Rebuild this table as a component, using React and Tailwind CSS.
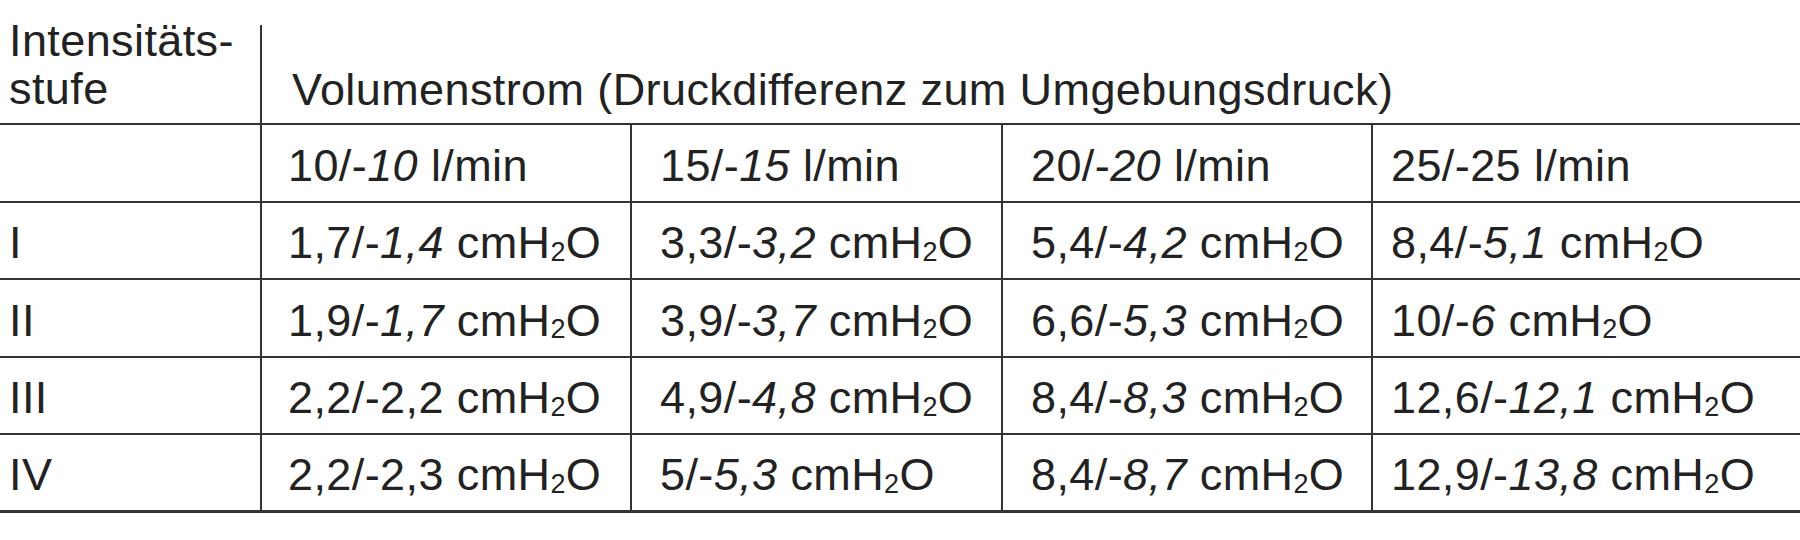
import React from "react";

const H2O = () => (
  <span>
    cmH<span className="relative top-[0.1em] text-[0.6em]">2</span>O
  </span>
);

const Val = ({ a, b, unit, it }) => (
  <span className="whitespace-nowrap">
    {a}/-<span className={it ? "italic" : ""}>{b}</span>{" "}
    {unit === "l" ? <span>l/min</span> : <H2O />}
  </span>
);

const rows = [
  { label: "", cells: [["10", "10", "l", 1], ["15", "15", "l", 1], ["20", "20", "l", 1], ["25", "25", "l", 0]], h: "h-[78px]" },
  { label: "I", cells: [["1,7", "1,4", "h", 1], ["3,3", "3,2", "h", 1], ["5,4", "4,2", "h", 1], ["8,4", "5,1", "h", 1]], h: "h-[77px]" },
  { label: "II", cells: [["1,9", "1,7", "h", 1], ["3,9", "3,7", "h", 1], ["6,6", "5,3", "h", 1], ["10", "6", "h", 1]], h: "h-[78px]" },
  { label: "III", cells: [["2,2", "2,2", "h", 0], ["4,9", "4,8", "h", 1], ["8,4", "8,3", "h", 1], ["12,6", "12,1", "h", 1]], h: "h-[77px]" },
  { label: "IV", cells: [["2,2", "2,3", "h", 0], ["5", "5,3", "h", 1], ["8,4", "8,7", "h", 1], ["12,9", "13,8", "h", 1]], h: "h-[77px]" },
];

const colCls = [
  "w-[370px] pl-[26px]",
  "w-[371px] pl-[28px]",
  "w-[370px] pl-[28px]",
  "flex-1 pl-[18px]",
];

export default function App() {
  return (
    <div
      className="w-[1800px] h-[540px] bg-white text-[#222] text-[45px] tracking-[0.4px] overflow-hidden"
      style={{ fontFamily: '"Liberation Sans", Arial, sans-serif' }}
    >
      {/* header */}
      <div className="flex h-[123px]">
        <div className="w-[260px] pl-[9px] pt-[17px] leading-[48px]">
          Intensitäts-
          <br />
          stufe
        </div>
        <div className="flex-1 mt-[25px] border-l-2 border-[#333] pl-[30px] pt-[41px] leading-[48px] whitespace-nowrap">
          Volumenstrom (Druckdifferenz zum Umgebungsdruck)
        </div>
      </div>
      {rows.map((r, i) => (
        <div key={i} className={`flex border-t-2 border-[#333] ${r.h}`}>
          <div className="w-[260px] pl-[9px] pt-[5px] flex items-center">{r.label}</div>
          {r.cells.map((c, j) => (
            <div key={j} className={`border-l-2 border-[#333] pt-[5px] flex items-center ${colCls[j]}`}>
              <Val a={c[0]} b={c[1]} unit={c[2]} it={c[3]} />
            </div>
          ))}
        </div>
      ))}
      <div className="border-t-[3px] border-[#333]" />
    </div>
  );
}
